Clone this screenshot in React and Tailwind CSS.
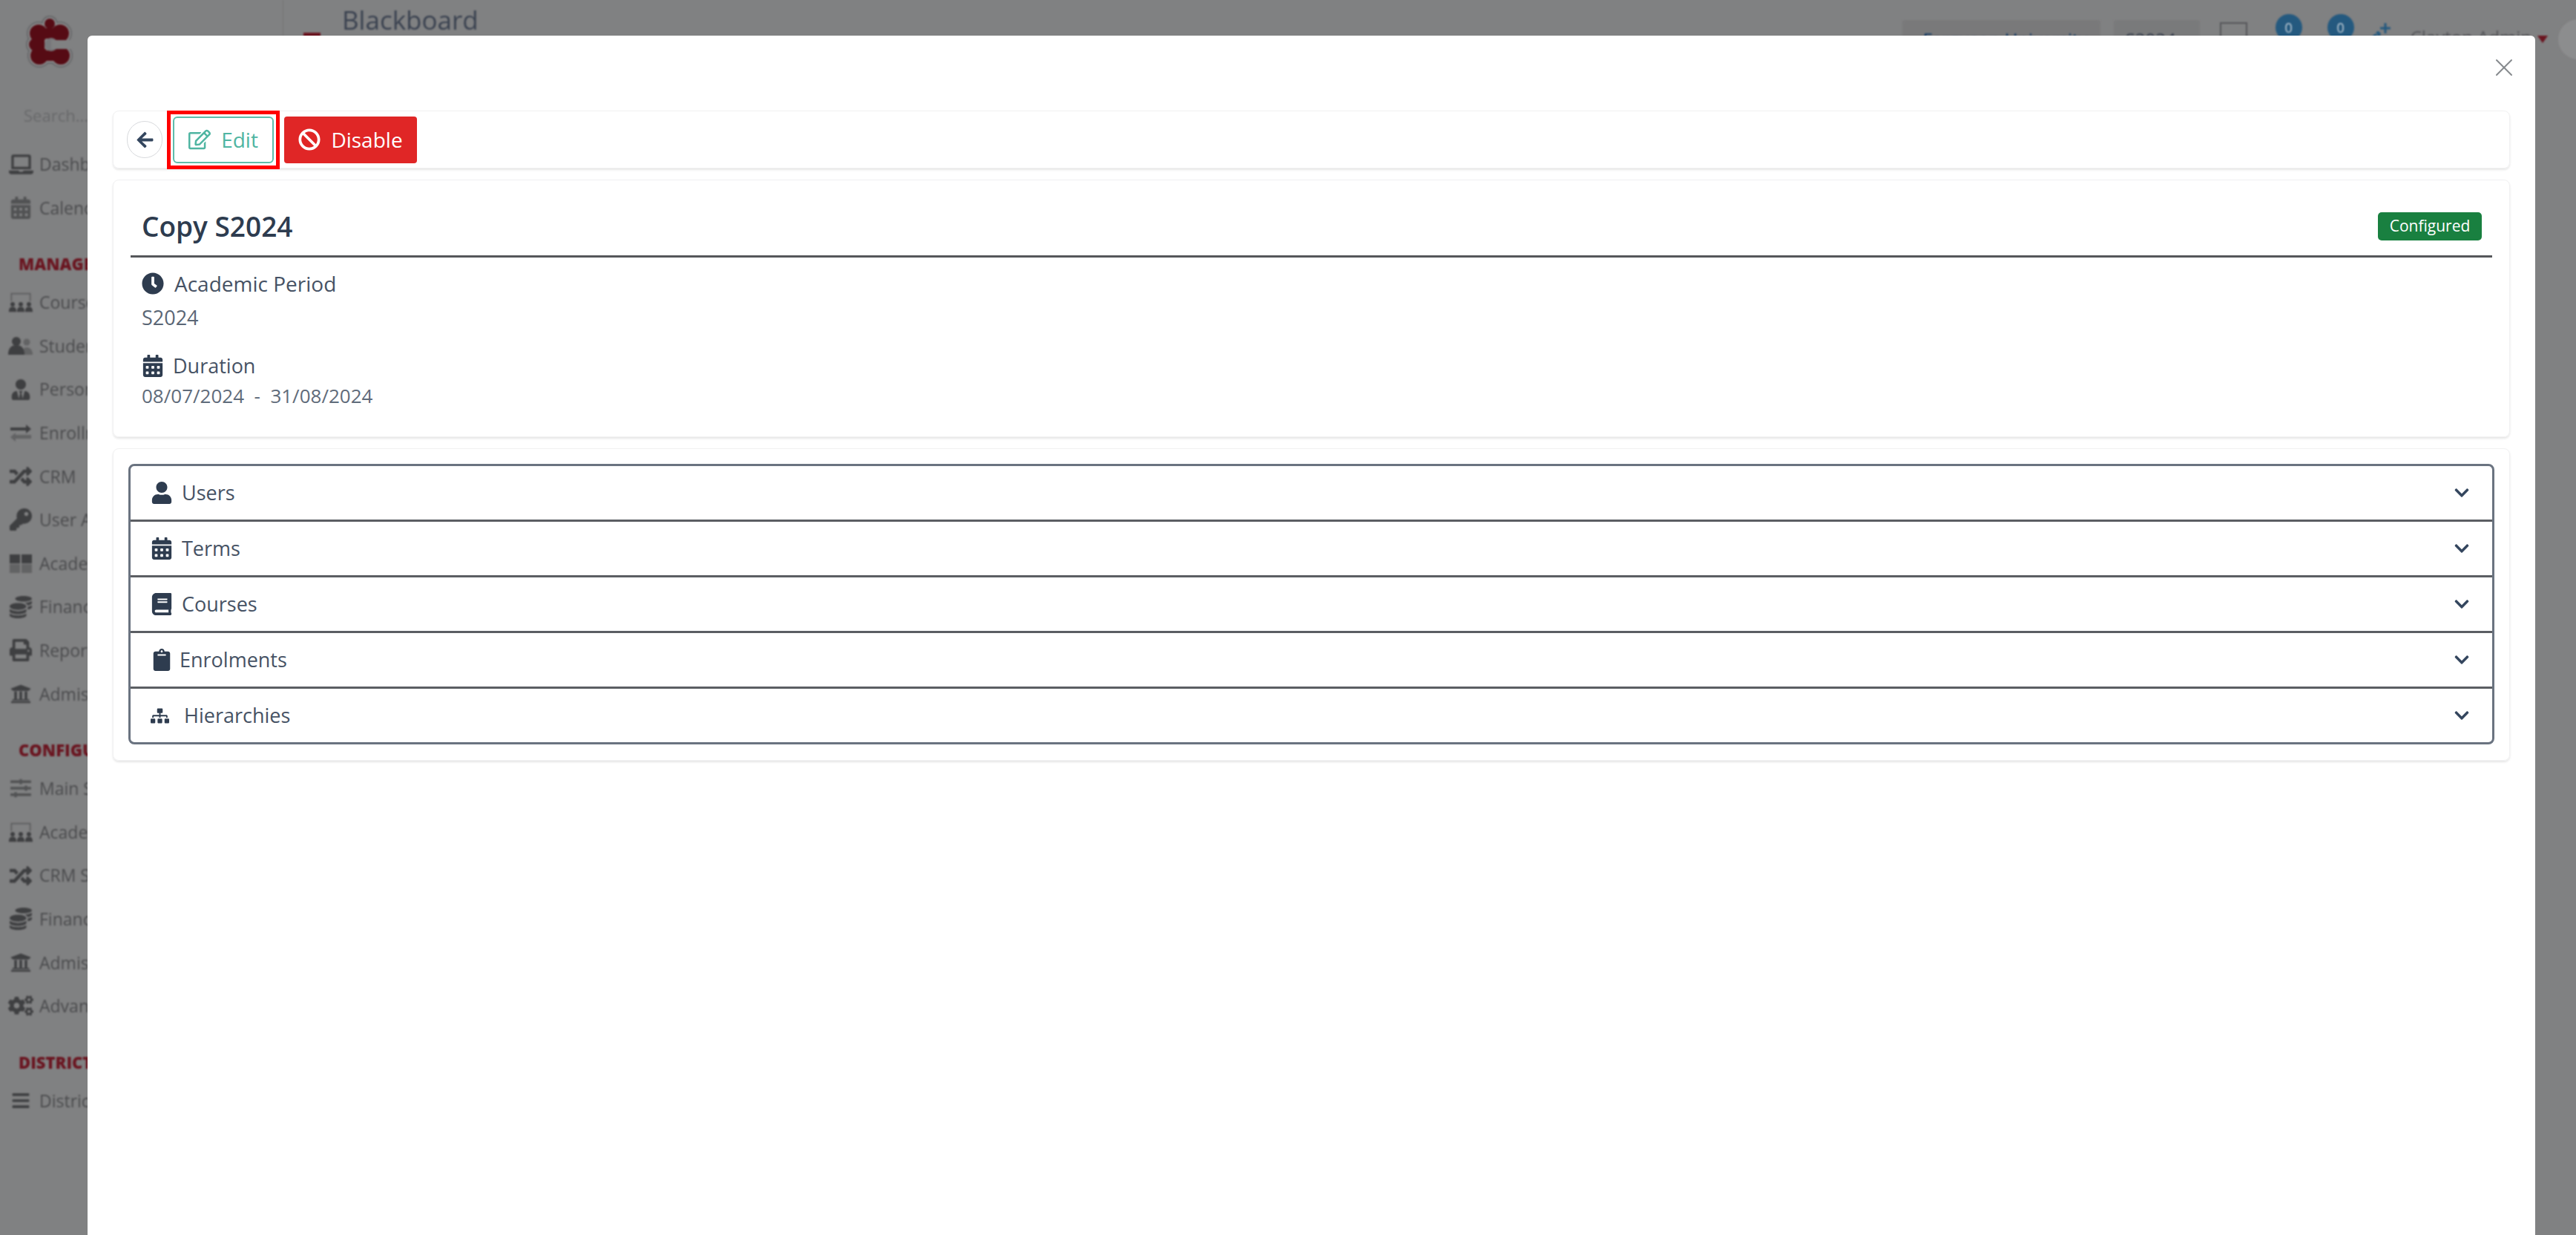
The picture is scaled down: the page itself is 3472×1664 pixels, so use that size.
import React from "react";
import { X } from "lucide-react";
import {
  FaArrowLeft, FaBan, FaBars, FaBook, FaCalendarAlt, FaChevronDown, FaClipboard, FaClock, FaCogs, FaCoins,
  FaKey, FaLaptop, FaPen, FaPlus, FaPrint, FaRandom, FaRegEdit, FaSitemap, FaSlidersH, FaUniversity,
  FaUser, FaUserTie,
} from "react-icons/fa";

// classroom icon used by the Courses / Academic rows in the sidebar
function ClassIcon() {
  return (
    <svg width="34" height="27" viewBox="0 0 40 32" fill="currentColor">
      <path d="M5 14V2h30v12" fill="none" stroke="currentColor" strokeWidth="2" opacity="0.55" />
      <circle cx="7" cy="19" r="3.5" />
      <circle cx="20" cy="19" r="3.5" />
      <circle cx="33" cy="19" r="3.5" />
      <path d="M1 31c0-6 2-8 6-8s6 2 6 8zM14 31c0-6 2-8 6-8s6 2 6 8zM27 31c0-6 2-8 6-8s6 2 6 8z" />
    </svg>
  );
}

function StudentsIcon() {
  return (
    <svg width="34" height="26" viewBox="0 0 34 26" fill="currentColor">
      <circle cx="25" cy="8" r="4.5" opacity="0.45" />
      <path d="M19 25c0-7 2-10 6-10s8 3 8 10z" opacity="0.45" />
      <circle cx="11" cy="7" r="6" />
      <path d="M0 25c0-9 4-13 11-13s11 4 11 13z" />
    </svg>
  );
}

function EnrollIcon() {
  return (
    <svg width="30" height="24" viewBox="0 0 30 24" fill="currentColor">
      <path d="M1 5h21V1l7 6-7 6V9H1z" />
      <path d="M29 15H8v-3l-7 6 7 6v-4h21z" opacity="0.45" />
    </svg>
  );
}

function AcademicIcon() {
  return (
    <svg width="30" height="25" viewBox="0 0 30 25" fill="currentColor">
      <rect x="0" y="0" width="14" height="12" />
      <rect x="16" y="0" width="14" height="12" />
      <rect x="0" y="13" width="14" height="12" opacity="0.45" />
      <rect x="16" y="13" width="14" height="12" opacity="0.45" />
    </svg>
  );
}

function Logo() {
  const shapes = (
    <>
      <circle cx="31" cy="14" r="7" />
      <circle cx="16" cy="27" r="12" />
      <circle cx="45" cy="27" r="12" />
      <circle cx="12" cy="42" r="9" />
      <circle cx="17" cy="57" r="12" />
      <circle cx="46" cy="57" r="12" />
      <rect x="16" y="20" width="30" height="14" />
      <rect x="17" y="50" width="30" height="14" />
      <rect x="8" y="25" width="16" height="34" />
    </>
  );
  return (
    <svg width="62" height="74" viewBox="0 0 62 74" className="overflow-visible">
      <g fill="#67686a" stroke="#67686a" strokeWidth="8">{shapes}</g>
      <g fill="#8a8b8c" stroke="#8a8b8c" strokeWidth="4">{shapes}</g>
      <g fill="#560b14">{shapes}</g>
      <circle cx="33" cy="42" r="9" fill="#77777a" />
      <rect x="33" y="36" width="29" height="12" fill="#808182" />
    </svg>
  );
}

const groups = [
  {
    items: [
      { label: "Dashboard", icon: <FaLaptop size={33} /> },
      { label: "Calendar", icon: <FaCalendarAlt size={30} className="opacity-70" /> },
    ],
  },
  {
    title: "MANAGEMENT",
    items: [
      { label: "Courses", icon: <ClassIcon /> },
      { label: "Students", icon: <StudentsIcon /> },
      { label: "Personnel", icon: <FaUserTie size={28} /> },
      { label: "Enrollment", icon: <EnrollIcon /> },
      { label: "CRM", icon: <FaRandom size={30} /> },
      { label: "User Access", icon: <FaKey size={30} /> },
      { label: "Academic", icon: <AcademicIcon /> },
      { label: "Finance", icon: <FaCoins size={30} /> },
      { label: "Reports", icon: <FaPrint size={30} /> },
      { label: "Admissions", icon: <FaUniversity size={28} /> },
    ],
  },
  {
    title: "CONFIGURATION",
    items: [
      { label: "Main Settings", icon: <FaSlidersH size={28} className="opacity-70" /> },
      { label: "Academic Settings", icon: <ClassIcon /> },
      { label: "CRM Settings", icon: <FaRandom size={30} /> },
      { label: "Finance Settings", icon: <FaCoins size={30} /> },
      { label: "Admissions Settings", icon: <FaUniversity size={28} /> },
      { label: "Advanced", icon: <FaCogs size={34} /> },
    ],
  },
  {
    title: "DISTRICT",
    items: [{ label: "District", icon: <FaBars size={26} /> }],
  },
];

const sections = [
  { title: "Users", icon: <FaUser size={30} className="w-auto" /> },
  { title: "Terms", icon: <FaCalendarAlt size={30} className="w-auto" /> },
  { title: "Courses", icon: <FaBook size={30} className="w-auto" /> },
  { title: "Enrolments", icon: <FaClipboard size={30} className="mr-[-3px] w-auto" /> },
  { title: "Hierarchies", icon: <FaSitemap size={25} className="mr-[8px] w-auto" /> },
];

export default function App() {
  return (
    <div className="relative h-[1664px] w-full overflow-hidden bg-[#808182] font-['Open_Sans','Noto_Sans',sans-serif]">
      {/* page behind the modal */}
      <div className="flex h-full blur-[1px]">
        <aside className="w-[260px] shrink-0 text-[#3e3f41]">
          <div className="pl-[36px] pt-[18px]">
            <Logo />
          </div>
          <div className="pl-[32px] pt-[48px] text-[22px] leading-[30px] text-[#68696b] whitespace-nowrap">Search...</div>
          <div className="pt-[22px]">
            {groups.map((group, index) => (
              <div key={index} className={group.title ? "mt-[23px]" : ""}>
                {group.title && (
                  <div className="h-[46px] pl-[25px] text-[22px] leading-[46px] font-extrabold text-[#6a1520] whitespace-nowrap">
                    {group.title}
                  </div>
                )}
                {group.items.map((item) => (
                  <div key={item.label} className="flex h-[58.6px] items-center whitespace-nowrap">
                    <div className="flex w-[53px] shrink-0 justify-center pl-[3px]">{item.icon}</div>
                    <span className="text-[23px] text-[#4a4b4d]">{item.label}</span>
                  </div>
                ))}
              </div>
            ))}
          </div>
        </aside>
        <header className="flex h-[120px] flex-1 items-start">
          <div className="ml-[121px] h-[48px] w-px bg-[#747576]" />
          <div className="ml-[27px] mt-[44px] h-[6px] w-[23px] bg-[#6a1520]" />
          <div className="ml-[29px] mt-[3px] text-[35px] leading-[48px] text-[#3a4250]">Blackboard</div>
          <div className="ml-auto flex items-start text-[#3a4250]">
            <div className="mt-[27px] h-[40px] w-[267px] whitespace-nowrap rounded bg-[#79797a] pl-[28px] pt-[8px] text-[24px] text-[#123a66]">Ferguson University</div>
            <div className="ml-[18px] mt-[27px] h-[40px] w-[116px] rounded bg-[#797a7b] pl-[16px] pt-[8px] text-[24px]">S2024</div>
            <div className="ml-[27px] mt-[30px] h-[30px] w-[37px] border-2 border-[#55565a]" />
            <div className="ml-[38px] mt-[19px] flex h-[36px] w-[36px] items-center justify-center rounded-full bg-[#24597f] text-[18px] text-[#c9d3db]">0</div>
            <div className="ml-[34px] mt-[19px] flex h-[36px] w-[36px] items-center justify-center rounded-full bg-[#24597f] text-[18px] text-[#c9d3db]">0</div>
            <div className="ml-[18px] mt-[30px] flex items-start text-[#24597f]">
              <FaPen size={18} className="mt-[12px]" />
              <FaPlus size={16} className="-ml-[2px]" />
            </div>
            <div className="ml-[26px] mt-[35px] text-[24px] leading-[30px] whitespace-nowrap text-[#55565a]">Clayton Admin</div>
            <div className="ml-[8px] mt-[48px] h-0 w-0 border-x-[7px] border-t-[10px] border-x-transparent border-t-[#6a1520]" />
            <div className="ml-[14px] mr-[-30px] mt-[26px] h-[54px] w-[54px] rounded-full bg-[#8c8d8e]" />
          </div>
        </header>
      </div>

      {/* modal */}
      <div className="absolute inset-0 pl-[118px] pr-[55px] pt-[48px]">
        <div className="relative h-[1700px] rounded-t-[6px] bg-white px-[34px] pt-[101px]">
          <X size={40} strokeWidth={1.2} className="absolute right-[22px] top-[23px] text-[#85898d]" />

          {/* toolbar */}
          <div className="flex h-[78px] items-center gap-[6px] rounded-[8px] border border-[#f1f1f2] pl-[18px] shadow-[0_2px_3px_rgba(0,0,0,0.1)]">
            <button className="flex h-[50px] w-[48px] items-center justify-center rounded-full border border-[#d8dadd] text-[#34465e]">
              <FaArrowLeft size={25} />
            </button>
            <div className="h-[79px] border-[5px] border-[#ff0000] p-[3px]">
              <button className="flex h-[63px] w-[136px] items-center justify-center gap-[14px] rounded-[6px] border-[2px] border-[#5fbcab] text-[28px] text-[#4fb5a2]">
                <FaRegEdit size={30} />
                Edit
              </button>
            </div>
            <button className="flex h-[63px] w-[179px] items-center justify-center gap-[14px] rounded-[4px] bg-[#e02626] text-[28px] text-white">
              <FaBan size={30} />
              Disable
            </button>
          </div>

          {/* period details */}
          <div className="mt-[15px] h-[347px] rounded-[8px] border border-[#f1f1f2] shadow-[0_2px_3px_rgba(0,0,0,0.1)]">
            <div className="mx-[23px] flex h-[104px] items-center justify-between border-b-[3px] border-[#55575a] pl-[15px] pr-[14px] pt-[22px]">
              <h2 className="text-[37px] font-semibold text-[#2e3c4f]">Copy S2024</h2>
              <span className="flex h-[38px] w-[140px] items-center justify-center rounded-[5px] bg-[#198040] text-[21px] text-white">Configured</span>
            </div>
            <div className="pl-[38px] pt-[18px] text-[#465264]">
              <div className="flex h-[34px] items-center gap-[14px] text-[28px]">
                <FaClock size={30} className="text-[#2e3c4f]" />
                Academic Period
              </div>
              <div className="mt-[12px] h-[34px] text-[27px] leading-[34px] text-[#5a6675]">S2024</div>
              <div className="mt-[31px] flex h-[34px] items-center gap-[12px] text-[27px]">
                <FaCalendarAlt size={30} className="w-auto text-[#2e3c4f]" />
                Duration
              </div>
              <div className="mt-[6px] h-[34px] text-[26px] leading-[34px] whitespace-pre text-[#5f6b7a]">08/07/2024  -  31/08/2024</div>
            </div>
          </div>

          {/* accordion */}
          <div className="mt-[15px] h-[421px] rounded-[8px] border border-[#f1f1f2] px-[20px] pt-[20px] shadow-[0_2px_3px_rgba(0,0,0,0.1)]">
            <div className="flex h-[378px] flex-col rounded-[8px] border-[3px] border-[#6a7380]">
              {sections.map((section, index) => (
                <div
                  key={section.title}
                  className={`flex flex-1 items-center justify-between pl-[27px] pr-[30px] text-[#465264] ${index > 0 ? "border-t-[3px] border-[#5b5e63]" : ""}`}
                >
                  <div className="flex items-center gap-[12px] text-[27px]">
                    <span className="text-[#2e3c4f]">{section.icon}</span>
                    {section.title}
                  </div>
                  <FaChevronDown size={22} className="text-[#34465e]" />
                </div>
              ))}
            </div>
          </div>
        </div>
      </div>
    </div>
  );
}
